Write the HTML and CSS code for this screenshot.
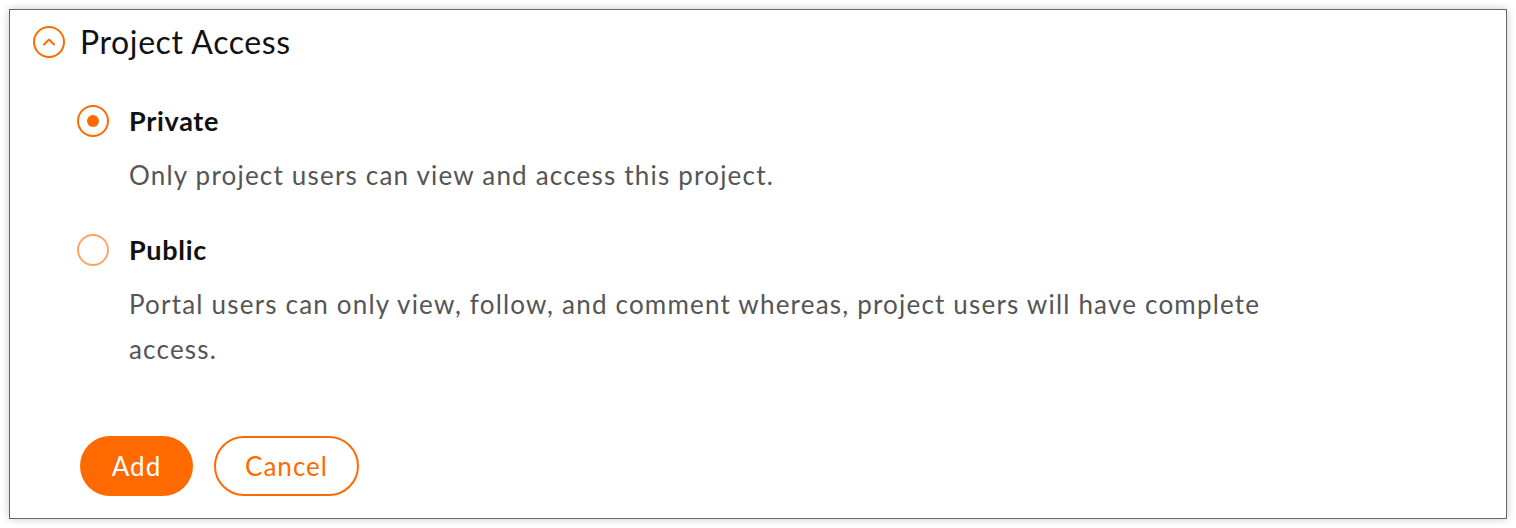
FILE: index.html
```html
<!DOCTYPE html>
<html>
<head>
<meta charset="utf-8">
<link rel="stylesheet" href="styles.css">
</head>
<body>
<div class="card">
  <div class="header">
    <svg class="toggle" width="32" height="32" viewBox="0 0 32 32"><circle cx="16" cy="16" r="15" fill="none" stroke="#ff6a00" stroke-width="2"/><path d="M11 18.5 L16 13.5 L21 18.5" fill="none" stroke="#ff6a00" stroke-width="2" stroke-linecap="round" stroke-linejoin="round"/></svg>
    <h2 class="title">Project Access</h2>
  </div>
  <div class="options">
    <div class="option">
      <div class="opt-row">
        <span class="radio checked"><span class="dot"></span></span>
        <span class="label">Private</span>
      </div>
      <p class="desc">Only project users can view and access this project.</p>
    </div>
    <div class="option second">
      <div class="opt-row">
        <span class="radio"></span>
        <span class="label">Public</span>
      </div>
      <p class="desc">Portal users can only view, follow, and comment whereas, project users will have complete access.</p>
    </div>
  </div>
  <div class="actions">
    <button class="btn primary">Add</button>
    <button class="btn outline">Cancel</button>
  </div>
</div>
</body>
</html>
```
FILE: styles.css
```css
html, body { margin: 0; padding: 0; background: #fff; }
body { padding: 9px; font-family: Lato, "Noto Sans", sans-serif; }
.card {
  box-sizing: border-box;
  width: 1498px;
  height: 510px;
  border: 1px solid #666;
  box-shadow: 0 0 8px rgba(0,0,0,0.22);
  padding: 0 0 0 23px;
  background: #fff;
}
.header { display: flex; align-items: center; gap: 15px; height: 64px; }
.toggle { display: block; flex: none; }
.title { margin: 0; font-size: 32px; font-weight: 400; color: #111; line-height: 40px; letter-spacing: 0.6px; }
.options { margin-left: 44px; padding-top: 31px; }
.opt-row { display: flex; align-items: center; gap: 20px; height: 32px; }
.radio {
  box-sizing: border-box; width: 32px; height: 32px; border-radius: 50%;
  border: 2px solid #ffa366; display: flex; align-items: center; justify-content: center;
}
.radio.checked { border-color: #ff6a00; }
.dot { width: 12px; height: 12px; border-radius: 50%; background: #ff6a00; }
.label { font-size: 27px; font-weight: 700; color: #111; line-height: 32px; letter-spacing: 0.7px; }
.desc { margin: 16px 0 0 52px; font-size: 26px; line-height: 45px; color: #555; max-width: 1150px; letter-spacing: 1.2px; }
.second { margin-top: 36px; }
.second .desc { margin-top: 16px; }
.actions { display: flex; gap: 21px; margin: 64px 0 0 47px; }
.btn {
  box-sizing: border-box; height: 60px; border-radius: 30px; font-family: Lato, sans-serif;
  font-size: 26px; cursor: pointer; letter-spacing: 1px; padding: 0;
}
.primary { width: 113px; background: #ff6a00; border: none; color: #fff; }
.outline { width: 145px; background: #fff; border: 2px solid #ff6a00; color: #ff6a00; }
```
